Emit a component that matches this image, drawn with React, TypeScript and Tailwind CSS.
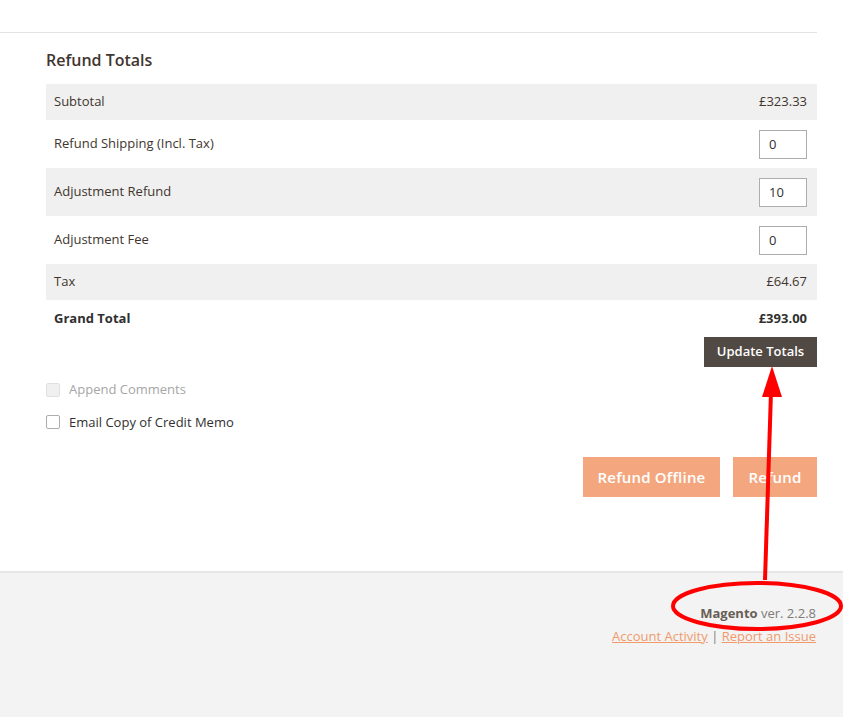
import React from "react";

interface TotalRow {
  label: string;
  value?: string;
  input?: string;
  shaded?: boolean;
  tall?: boolean;
  bold?: boolean;
}

const rows: TotalRow[] = [
  { label: "Subtotal", value: "£323.33", shaded: true },
  { label: "Refund Shipping (Incl. Tax)", input: "0", tall: true },
  { label: "Adjustment Refund", input: "10", shaded: true, tall: true },
  { label: "Adjustment Fee", input: "0", tall: true },
  { label: "Tax", value: "£64.67", shaded: true },
  { label: "Grand Total", value: "£393.00", bold: true },
];

function Annotation() {
  return (
    <svg
      className="pointer-events-none absolute left-0 top-0"
      width="843"
      height="717"
      viewBox="0 0 843 717"
    >
      <line x1="765" y1="580" x2="771" y2="392" stroke="#ff0000" strokeWidth="4" />
      <polygon points="772,366 762,397 782,397" fill="#ff0000" />
      <ellipse cx="757" cy="606" rx="84" ry="23" fill="none" stroke="#ff0000" strokeWidth="4" />
    </svg>
  );
}

export default function App() {
  return (
    <div className="relative flex min-h-[717px] flex-col bg-white font-['Open_Sans',sans-serif] text-[13px] text-[#303030]">
      {/* Main content */}
      <div className="h-[571px] pr-[26px]">
        <div className="h-[33px] border-b border-[#e3e3e3]" />
        <div className="pl-[46px]">
          <h2 className="pt-[16px] pb-[13px] text-[16px] leading-[22px] font-semibold text-[#41362f]">
            Refund Totals
          </h2>

          <div className="flex flex-col">
            {rows.map((row) => (
              <div
                key={row.label}
                className={`flex items-center justify-between pl-2 pr-[10px] ${
                  row.tall ? "h-12" : row.bold ? "h-[37px]" : "h-9"
                } ${row.shaded ? "bg-[#f0f0f0]" : "bg-white"} ${
                  row.bold ? "font-bold text-[#303030]" : "text-[#41362f]"
                }`}
              >
                <span>{row.label}</span>
                {row.input !== undefined ? (
                  <input
                    defaultValue={row.input}
                    className="h-[29px] w-12 border border-[#adadad] bg-white px-[9px] text-[13px] text-[#303030] outline-none"
                  />
                ) : (
                  <span>{row.value}</span>
                )}
              </div>
            ))}
          </div>

          <div className="flex justify-end">
            <button className="h-[30px] w-[113px] bg-[#514943] text-[13px] font-semibold text-white">
              Update Totals
            </button>
          </div>

          <div className="mt-[13px] flex flex-col gap-[13px]">
            <label className="flex items-center gap-[9px] text-[#a6a6a6]">
              <span className="h-[14px] w-[14px] rounded-[2px] border border-[#e0e0e0] bg-[#f0f0f0]" />
              Append Comments
            </label>
            <label className="flex items-center gap-[9px] text-[#303030]">
              <span className="h-[14px] w-[14px] rounded-[2px] border border-[#adadad] bg-white" />
              Email Copy of Credit Memo
            </label>
          </div>

          <div className="mt-[25px] flex justify-end gap-[13px]">
            <button className="h-10 w-[137px] bg-[#f4a77f] text-[15px] font-semibold tracking-[0.2px] text-white">
              Refund Offline
            </button>
            <button className="h-10 w-[84px] bg-[#f4a77f] text-[15px] font-semibold tracking-[0.2px] text-white">
              Refund
            </button>
          </div>
        </div>
      </div>

      {/* Footer */}
      <footer className="flex flex-1 flex-col items-end border-t-2 border-[#e6e6e6] bg-[#f3f3f3] pr-[27px] pt-[30px]">
        <p className="leading-[20px] text-[#807b78]">
          <span className="font-bold text-[#676056]">Magento</span> ver. 2.2.8
        </p>
        <p className="mt-[3px] leading-[20px] text-[#807b78]">
          <a className="text-[#f09a6c] underline">Account Activity</a> |{" "}
          <a className="text-[#f09a6c] underline">Report an Issue</a>
        </p>
      </footer>

      <Annotation />
    </div>
  );
}
